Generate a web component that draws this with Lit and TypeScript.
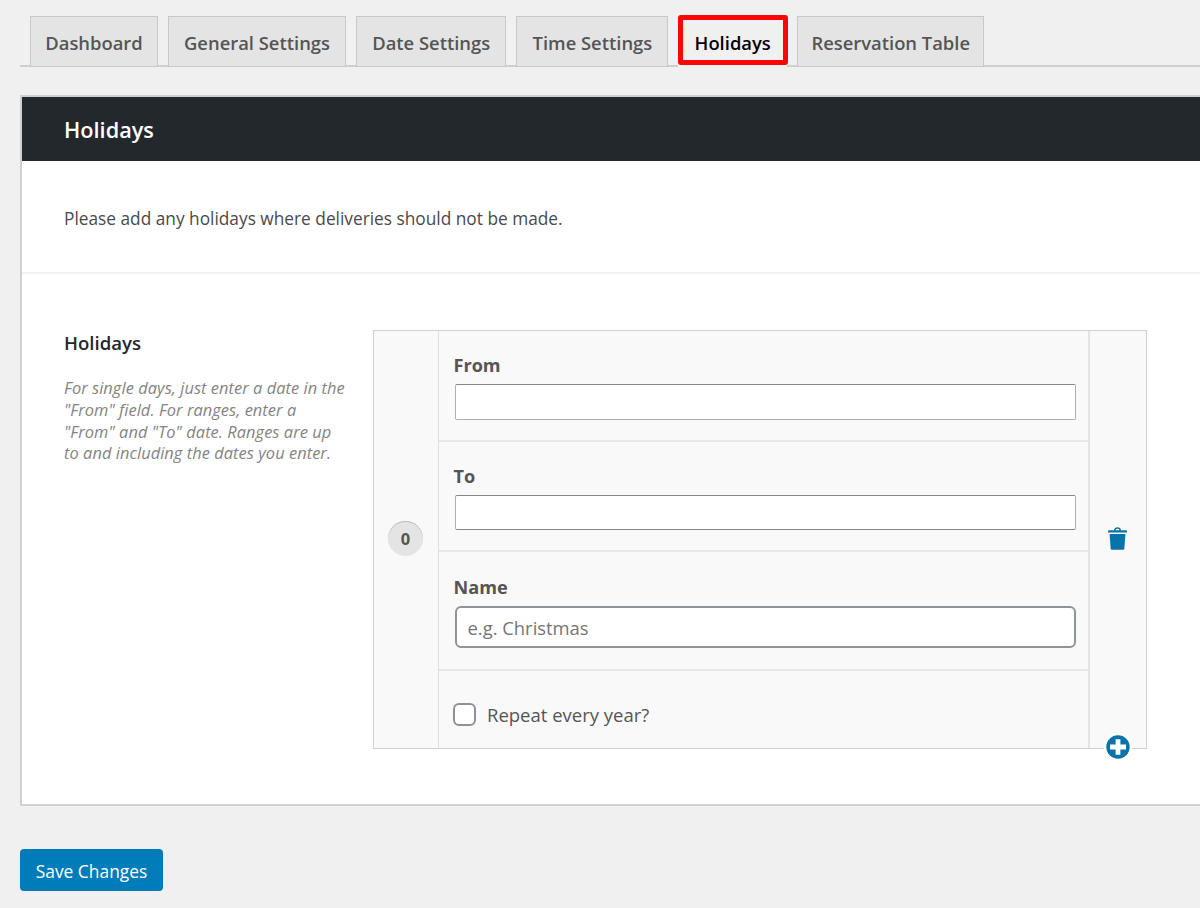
import { LitElement, html, css } from "lit";
import { customElement, property } from "lit/decorators.js";
import { classMap } from "lit/directives/class-map.js";

const TABS = [
  { id: "dashboard", label: "Dashboard" },
  { id: "general", label: "General Settings" },
  { id: "date", label: "Date Settings" },
  { id: "time", label: "Time Settings" },
  { id: "holidays", label: "Holidays" },
  { id: "reservations", label: "Reservation Table" },
];

@customElement("settings-tabs")
export class SettingsTabs extends LitElement {
  @property() active = "holidays";

  static styles = css`
    :host {
      display: block;
      padding: 16px 0 0 20px;
    }
    .bar {
      display: grid;
      grid-template-columns: 128px 178px 150.4px 152px 108.6px 187.5px;
      column-gap: 10px;
      padding-left: 10px;
      height: 49px;
      border-bottom: 2px solid #cfcfd0;
    }
    .tab {
      box-sizing: border-box;
      height: 51px;
      border: 1px solid #c8c8c9;
      background: #e4e4e4;
      color: #555;
      font-size: 18.4px;
      font-weight: 600;
      line-height: 51px;
      text-align: center;
      white-space: nowrap;
    }
    .tab.active {
      position: relative;
      border-color: transparent;
      background: #f0f0f0;
      color: #000;
    }
    .tab.active::after {
      content: "";
      position: absolute;
      inset: -2px -2px 1px -1px;
      border: 5px solid #f90606;
      border-radius: 3px;
    }
  `;

  render() {
    return html`<nav class="bar">
      ${TABS.map(
        (t) => html`<a class=${classMap({ tab: true, active: t.id === this.active })}>${t.label}</a>`
      )}
    </nav>`;
  }
}

@customElement("holiday-repeater")
export class HolidayRepeater extends LitElement {
  static styles = css`
    :host {
      display: grid;
      grid-template-columns: 65px 651px 1fr;
      box-sizing: border-box;
      width: 774px;
      height: 419px;
      border: 1px solid #d0d1d3;
      background: #f9f9f9;
      color: #555;
    }
    .order,
    .actions {
      display: flex;
      align-items: center;
      justify-content: center;
      position: relative;
    }
    .order {
      border-right: 1px solid #e1e1e1;
    }
    .badge {
      width: 35px;
      height: 35px;
      margin: 0 1px 2px 0;
      border-radius: 50%;
      background: #e4e4e4;
      box-shadow: inset 0 1px 0 #bdbdbd;
      font-size: 16.5px;
      font-weight: 700;
      line-height: 36px;
      text-align: center;
    }
    .fields {
      display: grid;
      grid-template-rows: 111px 110px 119px 1fr;
      border-right: 2px solid #e4e4e4;
    }
    .field {
      box-sizing: border-box;
      display: flex;
      flex-direction: column;
      padding: 22px 12px 0 14.5px;
      border-bottom: 2px solid #e7e7e7;
    }
    .field:last-child {
      border-bottom: 0;
    }
    .label {
      font-size: 18.1px;
      font-weight: 700;
      line-height: 24px;
    }
    .input {
      box-sizing: border-box;
      width: 621px;
      height: 36px;
      margin: 7px 0 0 1.5px;
      padding: 0 12px;
      border: 1px solid #b0b0b0;
      border-top-color: #868686;
      border-radius: 2px;
      background: #fff;
      font: 400 18.4px "Open Sans", "Noto Sans", sans-serif;
      color: #32373c;
    }
    .input.short {
      height: 35px;
      border-bottom-color: #868686;
    }
    .field.named {
      padding-top: 23px;
    }
    .input.rounded {
      height: 42px;
      padding: 0 10.5px;
      border: 2px solid #8f9498;
      border-radius: 6px;
    }
    .input::placeholder {
      color: #757575;
      opacity: 1;
    }
    .check {
      display: flex;
      align-items: center;
      gap: 11px;
      margin: 8px 0 0 -0.5px;
      font-size: 18.5px;
      line-height: 28px;
    }
    .box {
      box-sizing: border-box;
      width: 23px;
      height: 23px;
      margin-bottom: 1px;
      border: 2px solid #8c9298;
      border-radius: 6px;
      background: #fff;
    }
    .trash {
      width: 19px;
      height: 23px;
      margin: 0 1px 2px 0;
    }
    .add {
      position: absolute;
      left: 14px;
      bottom: -13px;
      width: 28px;
      height: 28px;
    }
    svg {
      display: block;
    }
  `;

  render() {
    return html`
      <div class="order"><span class="badge">0</span></div>
      <div class="fields">
        <label class="field"><span class="label">From</span><input class="input" /></label>
        <label class="field"><span class="label">To</span><input class="input short" /></label>
        <label class="field named"
          ><span class="label">Name</span><input class="input rounded" placeholder="e.g. Christmas"
        /></label>
        <div class="field">
          <div class="check"><span class="box"></span><span>Repeat every year?</span></div>
        </div>
      </div>
      <div class="actions">
        <svg class="trash" viewBox="0 0 19 23" fill="#0873aa">
          <path
            d="M0 4.2Q0 3.2 1 3.2H6Q6.4 0.3 9.5 0.3T13 3.2H18Q19 3.2 19 4.2V5.6H0ZM7.5 3.2H11.5Q11.2 1.8 9.5 1.8T7.5 3.2Z"
            fill-rule="evenodd"
          />
          <path d="M1.6 6.9H17.4L16.3 22Q16.2 22.8 15.3 22.8H3.7Q2.8 22.8 2.7 22Z" />
        </svg>
        <svg class="add" viewBox="0 0 28 28">
          <circle cx="14" cy="14" r="14" fill="#fff" />
          <circle cx="14" cy="14" r="11.7" fill="#0873aa" />
          <path d="M11.6 6.2h4.8v5.4h5.6v4.8h-5.6v5.4h-4.8v-5.4H6v-4.8h5.6z" fill="#fff" />
        </svg>
      </div>
    `;
  }
}

@customElement("app-root")
export class AppRoot extends LitElement {
  static styles = css`
    :host {
      display: block;
      box-sizing: border-box;
      height: 908px;
      overflow: hidden;
      background: #f0f0f0;
      color: #4a4a4a;
      font-family: "Open Sans", "Noto Sans", sans-serif;
    }
    .panel {
      box-sizing: border-box;
      height: 711px;
      margin: 28px 0 0 20px;
      border: 2px solid #cdd0d4;
      border-right: 0;
      background: #fff;
    }
    .title {
      margin: 0;
      padding-left: 42px;
      background: #23282d;
      color: #fff;
      font-size: 21.7px;
      font-weight: 600;
      line-height: 65px;
      height: 64px;
    }
    .intro {
      box-sizing: border-box;
      height: 113px;
      margin: 0;
      padding: 45px 0 0 42px;
      border-bottom: 2px solid #f1f1f1;
      font-size: 17.3px;
      line-height: 26px;
    }
    .section {
      display: flex;
      padding: 56px 0 0 42px;
    }
    .help {
      width: 309px;
      flex: none;
    }
    .heading {
      margin: -1px 0 0;
      color: #23282d;
      font-size: 18.6px;
      font-weight: 600;
      line-height: 27px;
    }
    .note {
      margin: 21px 0 0;
      color: #848484;
      font-size: 16.4px;
      font-style: italic;
      letter-spacing: 0.06px;
      line-height: 21.8px;
      white-space: nowrap;
    }
    .save {
      display: block;
      box-sizing: border-box;
      width: 143px;
      height: 42px;
      margin: 43px 0 0 20px;
      padding: 1px 0 0;
      border: 0;
      border-radius: 4px;
      background: #007cba;
      color: #fff;
      font: 400 17.4px/43px "Open Sans", "Noto Sans", sans-serif;
    }
  `;

  render() {
    return html`
      <settings-tabs active="holidays"></settings-tabs>
      <main class="panel">
        <h2 class="title">Holidays</h2>
        <p class="intro">Please add any holidays where deliveries should not be made.</p>
        <section class="section">
          <div class="help">
            <h3 class="heading">Holidays</h3>
            <p class="note">
              For single days, just enter a date in the<br />"From" field. For ranges, enter a<br />"From"
              and "To" date. Ranges are up<br />to and including the dates you enter.
            </p>
          </div>
          <holiday-repeater></holiday-repeater>
        </section>
      </main>
      <button class="save">Save Changes</button>
    `;
  }
}
